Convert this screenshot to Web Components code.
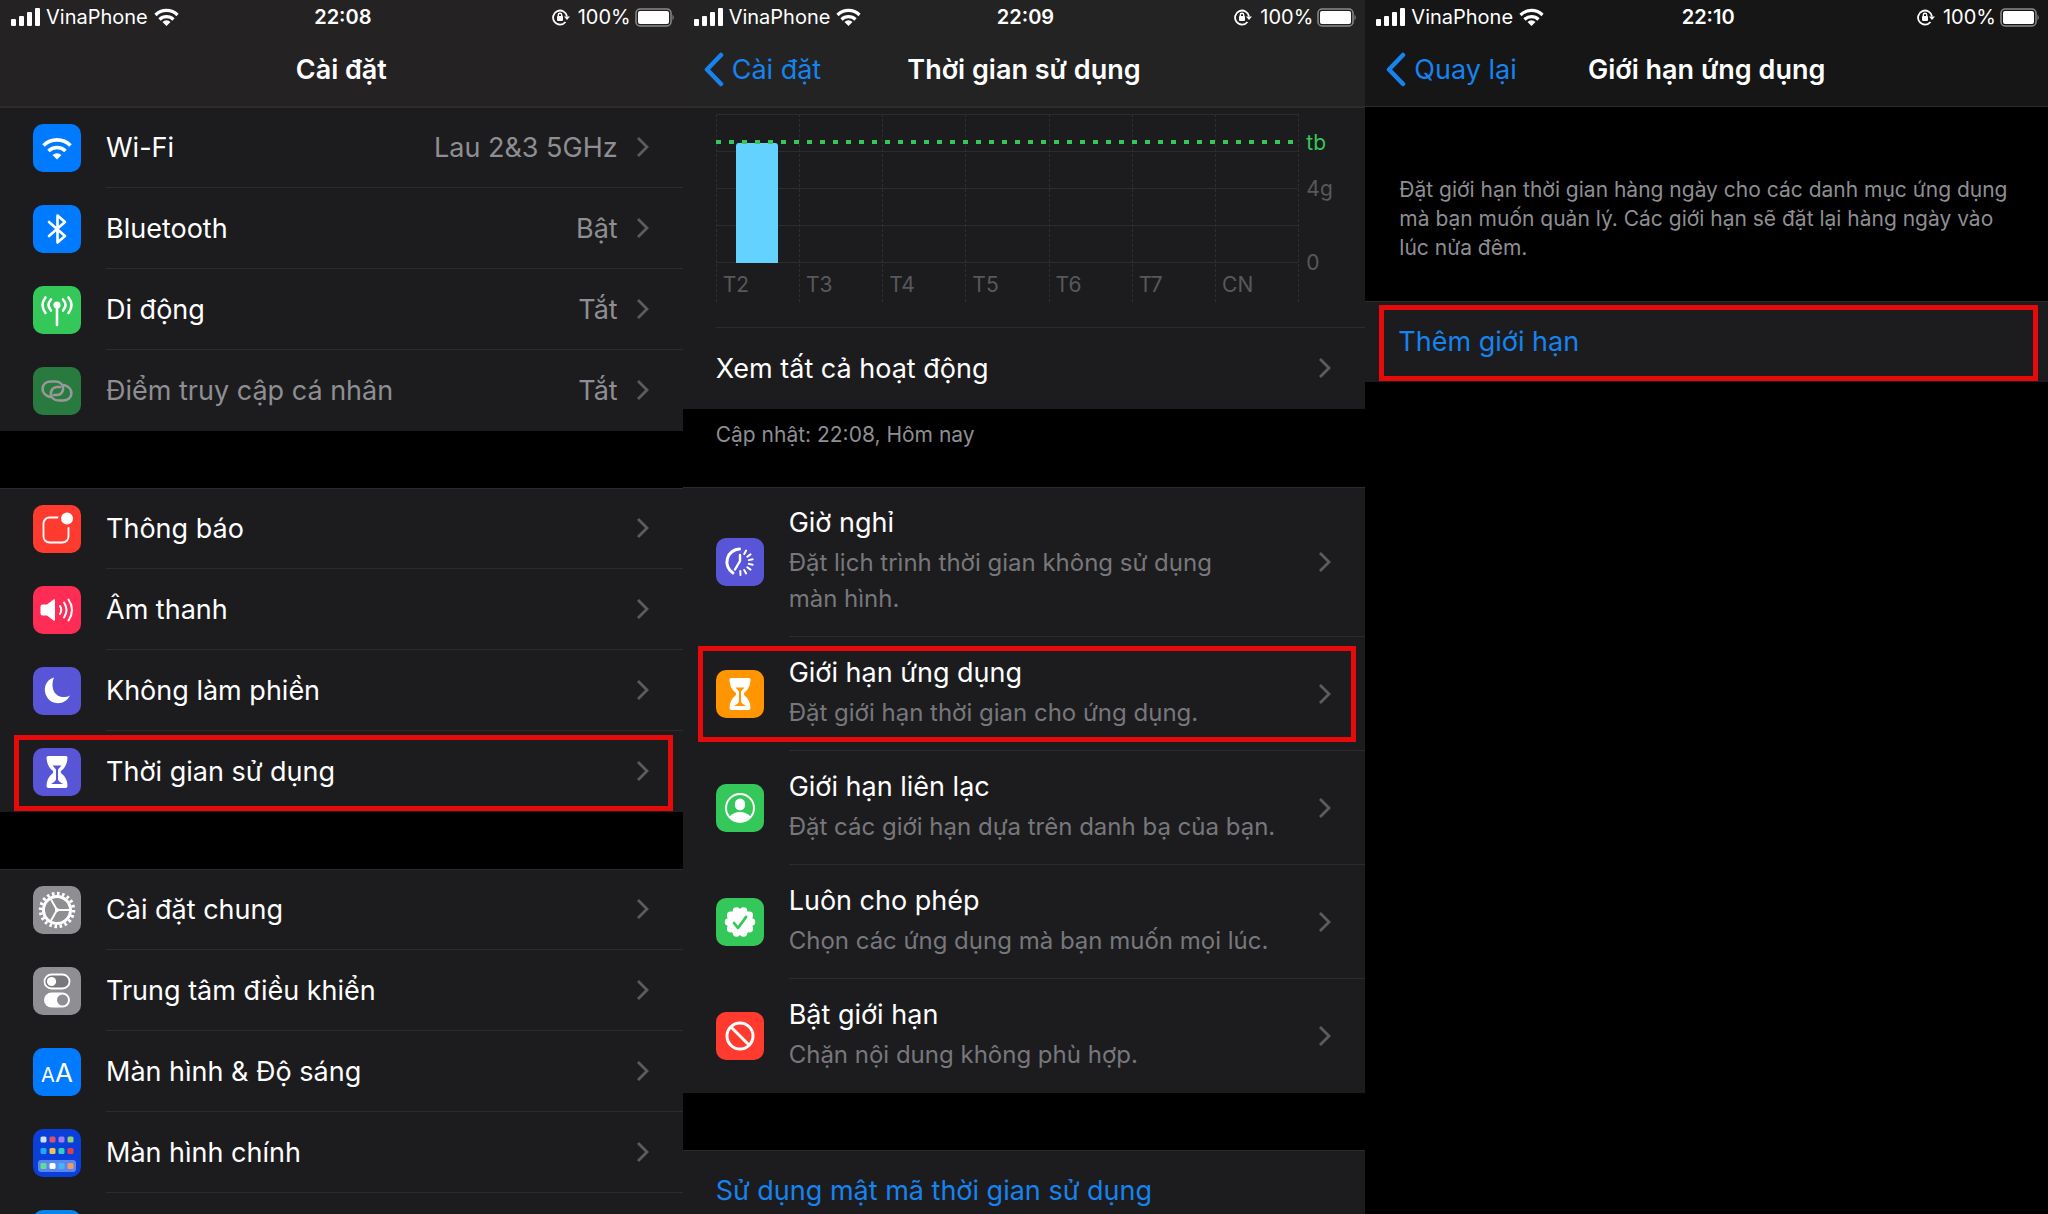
<!DOCTYPE html>
<html lang="vi">
<head>
<meta charset="utf-8">
<meta name="viewport" content="width=device-width, initial-scale=1">
<title>Thời gian sử dụng</title>
<style>
    body {
        margin: 0;
        background: #000;
        color: #fff;
        font-family: Inter, "Liberation Sans", sans-serif;
        font-size: 27px;
        --cell: #1c1c1e;
        --line: #2c2c2f;
        --muted: #8e8e93;
        --link: #1783ee;
        --mark: #e60a0a;
    }
    main {
        display: grid;
        grid-template-columns: repeat(3, minmax(0, 1fr));
        height: 100vh;
        overflow: hidden;
    }
</style>
</head>
<body>
<main>
    <phone-screen style="--bar: #242223">
        <status-bar slot="bar" carrier="VinaPhone" time="22:08" battery="100%"></status-bar>
        <nav-bar slot="bar">Cài đặt</nav-bar>
        <list-group>
            <list-row icon="wifi" value="Lau 2&amp;3 5GHz">Wi-Fi</list-row>
            <list-row icon="bluetooth" value="Bật">Bluetooth</list-row>
            <list-row icon="cellular" value="Tắt">Di động</list-row>
            <list-row icon="hotspot" value="Tắt" disabled>Điểm truy cập cá nhân</list-row>
        </list-group>
        <list-group>
            <list-row icon="notice">Thông báo</list-row>
            <list-row icon="sound">Âm thanh</list-row>
            <list-row icon="moon">Không làm phiền</list-row>
            <list-row icon="hourglass" marked>Thời gian sử dụng</list-row>
        </list-group>
        <list-group>
            <list-row icon="gear">Cài đặt chung</list-row>
            <list-row icon="toggles">Trung tâm điều khiển</list-row>
            <list-row icon="display">Màn hình &amp; Độ sáng</list-row>
            <list-row icon="home">Màn hình chính</list-row>
            <list-row icon="wallpaper"></list-row>
        </list-group>
    </phone-screen>

    <phone-screen style="--bar: #232323">
        <status-bar slot="bar" carrier="VinaPhone" time="22:09" battery="100%"></status-bar>
        <nav-bar slot="bar" back="Cài đặt">Thời gian sử dụng</nav-bar>
        <list-group>
            <usage-chart days="T2,T3,T4,T5,T6,T7,CN"></usage-chart>
            <list-row>Xem tất cả hoạt động</list-row>
            <span slot="footer">Cập nhật: 22:08, Hôm nay</span>
        </list-group>
        <list-group>
            <list-row icon="downtime" detail="Đặt lịch trình thời gian không sử dụng màn&nbsp;hình.">Giờ nghỉ</list-row>
            <list-row icon="limit" detail="Đặt giới hạn thời gian cho ứng dụng." marked>Giới hạn ứng dụng</list-row>
            <list-row icon="contact" detail="Đặt các giới hạn dựa trên danh bạ của bạn.">Giới hạn liên lạc</list-row>
            <list-row icon="allowed" detail="Chọn các ứng dụng mà bạn muốn mọi lúc.">Luôn cho phép</list-row>
            <list-row icon="blocked" detail="Chặn nội dung không phù hợp.">Bật giới hạn</list-row>
        </list-group>
        <list-group>
            <list-row action>Sử dụng mật mã thời gian sử dụng</list-row>
        </list-group>
    </phone-screen>

    <phone-screen style="--bar: #161617">
        <status-bar slot="bar" carrier="VinaPhone" time="22:10" battery="100%"></status-bar>
        <nav-bar slot="bar" back="Quay lại">Giới hạn ứng dụng</nav-bar>
        <list-group>
            <span slot="header">Đặt giới hạn thời gian hàng ngày cho các danh mục ứng dụng mà bạn muốn quản lý. Các giới hạn sẽ đặt lại hàng ngày vào lúc nửa đêm.</span>
            <list-row action marked>Thêm giới hạn</list-row>
        </list-group>
    </phone-screen>
</main>

<script>
const hourglass = color => `
    <path fill="#fff" d="M15 8h18q1.500 0 1.500 1.500C34.500 15 32 20 28.500 22.500q-1.500 1.500 0 3C32.500 28.500 34.500 33 34.500 38q0 2-2 2h-17q-2 0-2-2c0-5 2-9.500 6-12.500q1.500-1.500 0-3C16 20 13.500 15 13.500 9.500q0-1.500 1.500-1.500z"/>
    <path fill="${color}" d="M19.500 17.500h9L25 21.500v10c.5 2 3 3 5 4.500H18c2-1.500 4.500-2.500 5-4.500v-10z"/>`;

const homeDots = [
    ['#cfe0ff', '#e0526b', '#a17bf2', '#8fd07a'],
    ['#22a7f5', '#f2c14e', '#35cfc0', '#e0404e'],
    ['#5fe08a', '#ffffff', '#3fb8f5', '#f29a5f'],
].flatMap((row, y) => row.map((fill, x) =>
    `<rect x="${7.5 + x * 9}" y="${[7.5, 19, 34][y]}" width="6" height="6" rx="1.500" fill="${fill}"/>`)).join('');

const rays = [-62, -36, -12, 12, 36, 62, 88].map(deg =>
    `<path d="M33 24h4" transform="rotate(${deg} 24 24)"/>`).join('');

// background colour and glyph of every tile, on a 48 unit grid
const ICONS = {
    wifi: ['#007aff', `
        <g fill="none" stroke="#fff" stroke-width="3.600"><path d="M10.500 21.500a19 19 0 0 1 27 0M15.500 27a12 12 0 0 1 17 0"/></g>
        <path fill="#fff" d="M24 35.500 19.500 31a6.500 6.500 0 0 1 9 0z"/>`],
    bluetooth: ['#007aff', `<path fill="none" stroke="#fff" stroke-width="2.600" stroke-linejoin="round" stroke-linecap="round" d="m16 17 16 14-7.500 6.500v-27L32 17 16 31"/>`],
    cellular: ['#34c759', `
        <circle cx="24" cy="19" r="3.600" fill="#fff"/>
        <path fill="none" stroke="#fff" stroke-width="2.600" stroke-linecap="round" d="M24 20v19M18 13.500q-5 5.500 0 11M30 13.500q5 5.500 0 11M12.500 11.500q-6 7.500 0 15.500M35.500 11.500q6 7.500 0 15.500"/>`],
    hotspot: ['#34c759', `<path fill="none" stroke="#fff" stroke-width="2.600" stroke-linecap="round" d="M17 30C6 27 8 14.500 18 14.500h4C33 14.500 32 28 24 28h-3M31 18c11 3 9 15.500-1 15.500h-4C15 33.500 16 20 24 20h3"/>`],
    notice: ['#ff3b30', `
        <rect x="10.500" y="12.500" width="25" height="25" rx="6" fill="none" stroke="#fff" stroke-width="1.800"/>
        <circle cx="34" cy="13.500" r="7.500" fill="#fff" stroke="#ff3b30" stroke-width="3"/>`],
    sound: ['#ff2d55', `
        <path fill="#fff" d="M9.500 18.500H14l6.500-5q1.500-1 1.500 1v19q0 2-1.500 1l-6.500-5H9.500q-2 0-2-2v-7q0-2 2-2z"/>
        <path fill="none" stroke="#fff" stroke-width="2" stroke-linecap="round" d="M27 20q2.500 4 0 8M31 16.500q5 7.500 0 15M35.500 13.500q7 10.500 0 21"/>`],
    moon: ['#5856d6', `<path fill="#fff" d="M21 10.500C12 13 9.500 23 14 30c5 8.500 18 8.500 23-1.500-7 3.500-15 1-17-6.500-1-4-.5-8 1-11.500z"/>`],
    hourglass: ['#5856d6', hourglass('#5856d6')],
    gear: ['#8e8e93', `
        <g fill="none" stroke="#fff">
            <circle cx="24" cy="24" r="13.500" stroke-width="3"/>
            <circle cx="24" cy="24" r="16.500" stroke-width="3.500" pathLength="40" stroke-dasharray="1"/>
            <path stroke-width="2" d="M24 24h13M24 24l-6.500-11.500M24 24l-6.500 11.500"/>
        </g>
        <circle cx="24" cy="24" r="2" fill="#fff"/>`],
    toggles: ['#8e8e93', `
        <rect x="11.500" y="7.500" width="25" height="14" rx="7" fill="#77777c" stroke="#fff" stroke-width="1.800"/>
        <circle cx="18.500" cy="14.500" r="4.600" fill="#fff"/>
        <rect x="11" y="25.500" width="26" height="15" rx="7.500" fill="#fff"/>
        <circle cx="29.500" cy="33" r="5.500" fill="#8e8e93"/>`],
    display: ['#007aff', `
        <g fill="#fff" text-anchor="middle"><text x="15" y="34" font-size="20">A</text><text x="31" y="34" font-size="26">A</text></g>`],
    home: ['#0b3fd9', `<rect x="5" y="31" width="38" height="12" rx="3" fill="#5b86f0"/>${homeDots}`],
    wallpaper: ['#0a84e8', ''],
    downtime: ['#5856d6', `
        <g fill="none" stroke="#fff" stroke-width="2" stroke-linecap="round">
            <path stroke-width="3" d="M23.500 11A13 13 0 0 0 17 35"/>
            <path stroke-width="2.400" d="M24 17v6l-5 8.500"/>${rays}
        </g>`],
    limit: ['#ff9500', hourglass('#ff9500')],
    contact: ['#34c759', `
        <circle cx="24" cy="24" r="14" fill="none" stroke="#fff" stroke-width="2"/>
        <ellipse cx="24" cy="20.500" rx="5.200" ry="6" fill="#fff"/>
        <path fill="#fff" d="M13.500 32.500c3-3 6-4.500 10.500-4.500s7.500 1.500 10.500 4.500C32 36 28 38 24 38s-8-2-10.500-5.500z"/>`],
    allowed: ['#34c759', `
        <circle cx="24" cy="24" r="13" fill="#fff"/>
        <circle cx="24" cy="24" r="11.500" fill="none" stroke="#fff" stroke-width="7.500" stroke-linecap="round" pathLength="10" stroke-dasharray="0 1"/>
        <path fill="none" stroke="#34c759" stroke-width="2.800" stroke-linecap="round" stroke-linejoin="round" d="m18 25 4 5 8-11"/>`],
    blocked: ['#ff3b30', `<g fill="none" stroke="#fff" stroke-width="3"><circle cx="24" cy="24" r="13"/><path d="m15 15 18 18"/></g>`],
};

customElements.define('phone-screen', class extends HTMLElement {
    constructor() {
        super();
        this.attachShadow({ mode: 'open' }).innerHTML = `
            <style>
                :host {display: block;min-width: 0;}
                header {background: var(--bar);border-bottom: 1px solid #2b2b2c;padding-bottom: 2px;}
                .body {display: flex;flex-direction: column;gap: 57px;}
            </style>
            <header><slot name="bar"></slot></header>
            <div class="body"><slot></slot></div>`;
    }
});

customElements.define('status-bar', class extends HTMLElement {
    connectedCallback() {
        this.attachShadow({ mode: 'open' }).innerHTML = `
            <style>
                :host {display: grid;grid-template-columns: 1fr auto 1fr;align-items: center;height: 34px;padding: 0 8px 0 11px;font-size: 20px;}
                div {display: flex;align-items: center;gap: 6px;}
                .right {justify-content: flex-end;gap: 4px;}
                .lock {margin-right: 4px;}
                time {font-weight: 600;}
                svg {display: block;}
            </style>
            <div>
                <svg width="29" height="18" viewBox="0 0 29 18" fill="#fff"><rect y="11" width="5" height="7" rx="1"/><rect x="8" y="8" width="5" height="10" rx="1"/><rect x="16" y="4" width="5" height="14" rx="1"/><rect x="24" width="5" height="18" rx="1"/></svg>
                <span>${this.getAttribute('carrier')}</span>
                <svg width="25" height="18" viewBox="0 0 25 18">
                    <path fill="none" stroke="#fff" stroke-width="3.200" d="M1.500 7a15.500 15.500 0 0 1 22 0M5.500 11.500a10 10 0 0 1 14 0"/>
                    <path fill="#fff" d="M12.500 18 8.500 14a5.500 5.500 0 0 1 8 0z"/>
                </svg>
            </div>
            <time>${this.getAttribute('time')}</time>
            <div class="right">
                <svg class="lock" width="18" height="18" viewBox="0 0 18 18" fill="none" stroke="#fff">
                    <path stroke-width="1.800" d="M13.500 14A7 7 0 1 1 15 8.500"/>
                    <path fill="#fff" stroke="none" d="M12 8.500h6L15 12z"/>
                    <rect x="5" y="8" width="6" height="5" rx="1" fill="#fff" stroke="none"/>
                    <path stroke-width="1.400" d="M6.300 8.500V7a1.700 1.700 0 0 1 3.400 0v1.500"/>
                </svg>
                <span>${this.getAttribute('battery')}</span>
                <svg width="40" height="19" viewBox="0 0 40 19">
                    <rect x="1" y="1" width="35" height="17" rx="4" fill="none" stroke="#8a8a8c" stroke-width="1.500"/>
                    <rect x="3" y="3" width="31" height="13" rx="2" fill="#fff"/>
                    <path fill="#8a8a8c" d="M37.500 6.500q2.500 3 0 6z"/>
                </svg>
            </div>`;
    }
});

customElements.define('nav-bar', class extends HTMLElement {
    connectedCallback() {
        const back = this.getAttribute('back');
        this.attachShadow({ mode: 'open' }).innerHTML = `
            <style>
                :host {display: grid;grid-template-columns: 1fr auto 1fr;align-items: center;height: 70px;padding: 0 20px;}
                h1 {grid-column: 2;grid-row: 1;margin: 0;font-size: 27px;font-weight: 600;}
                a {grid-row: 1;display: flex;align-items: center;gap: 8px;color: var(--link);text-decoration: none;}
            </style>
            ${back ? `<a href="#">
                <svg width="21" height="35" viewBox="0 0 21 35"><path d="M18 3 4 17.500 18 32" fill="none" stroke="currentColor" stroke-width="4.500" stroke-linecap="round" stroke-linejoin="round"/></svg>
                <span>${back}</span></a>` : ''}
            <h1><slot></slot></h1>`;
    }
});

customElements.define('list-group', class extends HTMLElement {
    connectedCallback() {
        this.attachShadow({ mode: 'open' }).innerHTML = `
            <style>
                :host {display: block;}
                .cells {background: var(--cell);box-shadow: inset 0 1px var(--line);}
                ::slotted(span) {display: block;color: var(--muted);font-size: 21px;line-height: 29px;}
                ::slotted([slot=header]) {padding: 68px 34px 39px;}
                ::slotted([slot=footer]) {padding: 11px 33px 0;height: 10px;}
            </style>
            <slot name="header"></slot>
            <div class="cells"><slot></slot></div>
            <slot name="footer"></slot>`;
    }
});

customElements.define('app-icon', class extends HTMLElement {
    connectedCallback() {
        const [color, glyph] = ICONS[this.getAttribute('name')];
        this.attachShadow({ mode: 'open' }).innerHTML = `
            <style>
                :host {display: block;flex: none;width: 48px;height: 48px;border-radius: 10px;background: ${color};overflow: hidden;}
                svg {display: block;}
            </style>
            <svg width="48" height="48" viewBox="0 0 48 48" aria-hidden="true">${glyph}</svg>`;
    }
});

customElements.define('list-row', class extends HTMLElement {
    connectedCallback() {
        const icon = this.getAttribute('icon');
        const value = this.getAttribute('value');
        const detail = this.getAttribute('detail');
        const action = this.hasAttribute('action');
        const tag = action ? 'button' : 'a';
        this.attachShadow({ mode: 'open' }).innerHTML = `
            <style>
                :host {display: block;position: relative;}
                a, button {display: flex;align-items: center;gap: 25px;width: 100%;box-sizing: border-box;min-height: 81px;padding: 0 0 0 33px;border: 0;background: none;color: inherit;font: inherit;text-align: left;text-decoration: none;}
                button {color: var(--link);}
                .content {display: flex;align-items: center;gap: 18px;flex: 1;min-width: 0;align-self: stretch;padding-right: 34px;border-bottom: 1px solid var(--line);}
                :host(:last-of-type) .content {border-color: transparent;}
                .text {flex: 1;min-width: 0;}
                .value {color: var(--muted);}
                .detail {display: block;color: #77777c;font-size: 24px;line-height: 36px;}
                :host([detail]) .title {display: block;line-height: 44px;}
                :host([detail]) .text {padding: 14px 0 19px;}
                :host([disabled]) .title {color: var(--muted);}
                :host([disabled]) app-icon {opacity: 0.55;}
                :host([marked])::after {content: '';position: absolute;inset: 4px 10px 1px 14px;border: 5px solid var(--mark);pointer-events: none;}
                :host([marked][detail])::after {inset: 9px 9px 9px 15px;}
                svg {flex: none;}
            </style>
            <${tag} ${action ? 'type="button"' : 'href="#"'}>
                ${icon ? `<app-icon name="${icon}"></app-icon>` : ''}
                <span class="content">
                    <span class="text"><span class="title"><slot></slot></span>${detail ? `<span class="detail">${detail}</span>` : ''}</span>
                    ${value ? `<span class="value">${value}</span>` : ''}
                    ${action ? '' : '<svg width="13" height="22" viewBox="0 0 13 22"><path d="m2 2 9 9-9 9" fill="none" stroke="#5c5c60" stroke-width="2.800"/></svg>'}
                </span>
            </${tag}>`;
    }
});

customElements.define('usage-chart', class extends HTMLElement {
    connectedCallback() {
        const days = this.getAttribute('days').split(',');
        this.attachShadow({ mode: 'open' }).innerHTML = `
            <style>
                :host {display: block;padding: 7px 0 0 33px;font-size: 21px;color: #58585c;}
                .chart {display: flex;gap: 7px;padding: 0 31px 25px 0;border-bottom: 1px solid var(--line);}
                .plot {position: relative;display: grid;grid-template-columns: repeat(7, 1fr);flex: 1;border-right: 1px dashed #2e2e31;
                    background: repeating-linear-gradient(#2c2c2f 0 1px, transparent 1px 37px) top / 100% 149px no-repeat;}
                .day {display: flex;flex-direction: column;border-left: 1px dashed #2e2e31;}
                .area {display: flex;align-items: flex-end;height: 149px;padding-left: 24%;}
                .bar {width: 66%;height: 120px;border-radius: 3px 3px 0 0;background: #64d2ff;}
                .label {padding: 5px 0 0 6px;line-height: 34px;}
                .plot::after {content: '';position: absolute;inset: 26px 0 auto;height: 4px;background: repeating-linear-gradient(90deg, #35c759 0 5px, transparent 5px 13px);}
                .axis {display: flex;flex-direction: column;width: 28px;padding-top: 10px;line-height: 37px;}
                .axis .avg {color: #35c759;margin-bottom: 9px;}
                .axis .mid {margin-bottom: 37px;}
            </style>
            <div class="chart">
                <div class="plot">
                    ${days.map((day, i) => `<div class="day"><div class="area">${i ? '' : '<div class="bar"></div>'}</div><span class="label">${day}</span></div>`).join('')}
                </div>
                <div class="axis"><span class="avg">tb</span><span class="mid">4g</span><span>0</span></div>
            </div>`;
    }
});
</script>
</body>
</html>
